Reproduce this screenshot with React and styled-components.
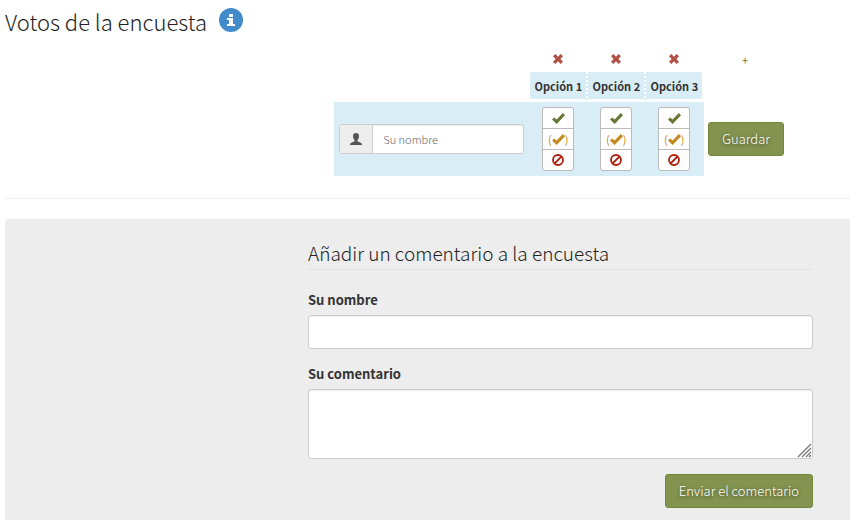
import React, { useState } from "react";
import styled, { createGlobalStyle } from "styled-components";

const GlobalStyle = createGlobalStyle`
  *, *::before, *::after { box-sizing: border-box; }
  body {
    margin: 0;
    background: #fff;
    color: #333;
    font: 13px/20px "Noto Sans CJK SC", "Open Sans", sans-serif;
  }
  button, input, textarea { font: inherit; color: inherit; }
`;

const Page = styled.main`
  padding-left: 5px;
`;

const TitleBar = styled.header`
  display: flex;
  align-items: center;
  gap: 12px;
  height: 42px;
`;

const Title = styled.h1`
  margin: 0;
  color: #222;
  font-size: 22px;
  font-weight: 300;
  line-height: 28px;
`;

const IconButton = styled.button`
  display: inline-flex;
  align-items: center;
  justify-content: center;
  padding: 0;
  border: 0;
  background: none;
  color: ${(p) => p.$color};
  font-size: 11px;
  line-height: 12px;
  cursor: pointer;
`;

const InfoButton = styled(IconButton)`
  margin-bottom: 2px;
`;

const TableWrap = styled.div`
  display: flex;
  justify-content: flex-end;
  padding: 6px 66px 22px 0;
  border-bottom: 1px solid #eee;
`;

const VoteTable = styled.table`
  border-collapse: separate;
  border-spacing: 0;
`;

const ToolCell = styled.td`
  height: 24px;
  padding: 0 2px 2px 0;
  text-align: center;
  vertical-align: middle;
`;

const AddCell = styled(ToolCell)`
  padding: 0 0 0 2px;
`;

const OptionHead = styled.th`
  width: 58px;
  height: 30px;
  padding: 0;
  background: #d9edf7;
  background-clip: border-box;
  border-right: 2px dotted #fff;
  border-bottom: 3px solid #fff;
  font-size: 11px;
  font-weight: 700;
  line-height: 18px;
  white-space: nowrap;
  &:last-of-type { border-right-style: solid; }
`;

const NameCell = styled.td`
  width: 196px;
  padding: 5px;
  background: #d9edf7;
`;

const ChoiceCell = styled.td`
  padding: 5px 14px 5px 12px;
  background: #d9edf7;
`;

const SaveCell = styled.td`
  padding: 0 0 0 4px;
`;

const NameGroup = styled.div`
  display: flex;
  width: 185px;
  height: 30px;
  border: 1px solid #ccc;
  border-radius: 3px;
  background: #fff;
  overflow: hidden;
`;

const Addon = styled.label`
  display: flex;
  align-items: center;
  justify-content: center;
  flex: 0 0 33px;
  border-right: 1px solid #ccc;
  background: #eee;
  color: #555;
`;

const NameInput = styled.input`
  flex: 1;
  min-width: 0;
  padding: 0 10px;
  border: 0;
  background: none;
  box-shadow: inset 0 1px 1px rgba(0, 0, 0, 0.075);
  font-size: 11px;
  font-weight: 300;
  &::placeholder { color: #666; opacity: 1; }
`;

const Choices = styled.div`
  display: flex;
  flex-direction: column;
  width: 32px;
  border: 1px solid #bbb;
  border-radius: 3px;
  background: #fff;
`;

const Choice = styled.label`
  display: flex;
  align-items: center;
  justify-content: center;
  height: 20px;
  color: ${(p) => p.$color};
  font-size: 11px;
  line-height: 18px;
  cursor: pointer;
  & + & { height: 21px; border-top: 1px solid #bbb; }
  svg { flex-shrink: 0; }
`;

const HiddenRadio = styled.input`
  appearance: none;
  width: 0;
  height: 0;
  margin: 0;
`;

const Button = styled.button`
  height: 34px;
  padding: 0 13px;
  border: 1px solid #74883c;
  border-radius: 3px;
  background: #849450;
  color: #fff;
  font-weight: 300;
  text-shadow: 0 1px 4px rgba(0, 0, 0, 0.6);
  white-space: nowrap;
  cursor: pointer;
`;

const CommentBox = styled.section`
  margin-top: 20px;
  padding: 20px 37px 12px 303px;
  border-radius: 3px 0 0 0;
  background: #ededed;
`;

const CommentForm = styled.form`
  display: flex;
  flex-direction: column;
`;

const Legend = styled.h2`
  margin: 0 0 20px;
  height: 31px;
  border-bottom: 1px solid #e2e2e2;
  color: #222;
  font-size: 19px;
  font-weight: 300;
  line-height: 28px;
`;

const Field = styled.div`
  display: flex;
  flex-direction: column;
  gap: 5px;
  margin-bottom: 15px;
`;

const FieldLabel = styled.label`
  font-weight: 700;
  line-height: 20px;
`;

const TextInput = styled.input`
  height: 34px;
  padding: 6px 12px;
  border: 1px solid #ccc;
  border-radius: 3px;
  background: #fff;
  box-shadow: inset 0 1px 1px rgba(0, 0, 0, 0.075);
`;

const AreaWrap = styled.div`
  display: grid;
`;

const TextArea = styled.textarea`
  grid-area: 1 / 1;
  height: 70px;
  padding: 6px 12px;
  border: 1px solid #ccc;
  border-radius: 3px;
  background: #fff;
  box-shadow: inset 0 1px 1px rgba(0, 0, 0, 0.075);
  resize: none;
`;

const Grip = styled.svg`
  grid-area: 1 / 1;
  place-self: end;
  margin: 1px;
  pointer-events: none;
`;

const SubmitRow = styled.div`
  display: flex;
  justify-content: flex-end;
`;

const CheckIcon = () => (
  <svg width="13" height="11" viewBox="0 0 12 10" fill="currentColor" aria-hidden="true">
    <path d="M0 6 2 4l2.3 2L10 0l2 2-7.7 8z" />
  </svg>
);

const BanIcon = () => (
  <svg width="12" height="12" viewBox="0 0 12 12" fill="none" stroke="currentColor" strokeWidth="1.8" aria-hidden="true">
    <circle cx="6" cy="6" r="5" />
    <path d="M2.5 9.5 9.5 2.5" />
  </svg>
);

const RemoveIcon = () => (
  <svg width="10" height="10" viewBox="0 0 10 10" fill="currentColor" aria-hidden="true">
    <path d="M2.3 0 5 2.7 7.7 0 10 2.3 7.3 5 10 7.7 7.7 10 5 7.3 2.3 10 0 7.7 2.7 5 0 2.3z" />
  </svg>
);

const UserIcon = () => (
  <svg width="12" height="12" viewBox="0 0 12 12" fill="currentColor" aria-hidden="true">
    <path d="M6 0C4 0 3 1.2 3 3c0 2 .6 3.2 1.500 4v1.300L.8 10Q0 10.400 0 12h12q0-1.600-.8-2L7.500 8.300V7C8.400 6.200 9 5 9 3c0-1.800-1-3-3-3z" />
  </svg>
);

const InfoIcon = () => (
  <svg width="24" height="24" viewBox="0 0 24 24" aria-hidden="true">
    <circle cx="12" cy="12" r="12" fill="#428bca" />
    <path d="M10 6h4v3h-4zM8 10h6v6h2v2H8v-2h2v-4H8z" fill="#fff" />
  </svg>
);

const choices = [
  { value: "yes", label: "Sí", color: "#677835", icon: <CheckIcon /> },
  { value: "maybe", label: "Sí, si es necesario", color: "#c48a1b", icon: <>(<CheckIcon />)</> },
  { value: "no", label: "No", color: "#ad220f", icon: <BanIcon /> },
];

const options = ["Opción 1", "Opción 2", "Opción 3"];

function ChoiceGroup({ option }) {
  const [selected, setSelected] = useState("");
  return (
    <Choices role="radiogroup" aria-label={option}>
      {choices.map((c) => (
        <Choice key={c.value} $color={c.color} title={c.label}>
          <HiddenRadio
            type="radio"
            name={option}
            aria-label={c.label}
            checked={selected === c.value}
            onChange={() => setSelected(c.value)}
          />
          {c.icon}
        </Choice>
      ))}
    </Choices>
  );
}

export default function App() {
  return (
    <Page>
      <GlobalStyle />
      <TitleBar>
        <Title>Votos de la encuesta</Title>
        <InfoButton type="button" aria-label="Información"><InfoIcon /></InfoButton>
      </TitleBar>

      <TableWrap>
        <VoteTable>
          <tbody>
            <tr>
              <ToolCell />
              {options.map((o) => (
                <ToolCell key={o}>
                  <IconButton type="button" $color="#b15043" aria-label={`Eliminar ${o}`}>
                    <RemoveIcon />
                  </IconButton>
                </ToolCell>
              ))}
              <AddCell>
                <IconButton type="button" $color="#677835" aria-label="Añadir una opción">+</IconButton>
              </AddCell>
            </tr>
            <tr>
              <td />
              {options.map((o) => <OptionHead key={o} scope="col">{o}</OptionHead>)}
              <td />
            </tr>
            <tr>
              <NameCell>
                <NameGroup>
                  <Addon htmlFor="voter"><UserIcon /></Addon>
                  <NameInput id="voter" type="text" placeholder="Su nombre" aria-label="Su nombre" />
                </NameGroup>
              </NameCell>
              {options.map((o) => (
                <ChoiceCell key={o}><ChoiceGroup option={o} /></ChoiceCell>
              ))}
              <SaveCell><Button type="button">Guardar</Button></SaveCell>
            </tr>
          </tbody>
        </VoteTable>
      </TableWrap>

      <CommentBox>
        <CommentForm onSubmit={(e) => e.preventDefault()}>
          <Legend>Añadir un comentario a la encuesta</Legend>
          <Field>
            <FieldLabel htmlFor="name">Su nombre</FieldLabel>
            <TextInput id="name" type="text" />
          </Field>
          <Field>
            <FieldLabel htmlFor="comment">Su comentario</FieldLabel>
            <AreaWrap>
              <TextArea id="comment" />
              <Grip width="15" height="15" viewBox="0 0 15 15" stroke="#777" strokeWidth="1.3" aria-hidden="true">
                <path d="M1 14 14 1M5 14l9-9M9 14l5-5M12 14l2-2" />
              </Grip>
            </AreaWrap>
          </Field>
          <SubmitRow><Button type="submit">Enviar el comentario</Button></SubmitRow>
        </CommentForm>
      </CommentBox>
    </Page>
  );
}
